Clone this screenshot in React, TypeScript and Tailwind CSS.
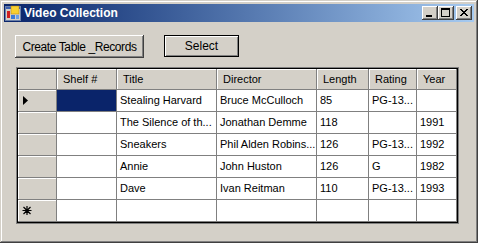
const rows = [
  { title: 'Stealing Harvard', director: 'Bruce McCulloch', length: '85', rating: 'PG-13...', year: '' },
  { title: 'The Silence of th...', director: 'Jonathan Demme', length: '118', rating: '', year: '1991' },
  { title: 'Sneakers', director: 'Phil Alden Robins...', length: '126', rating: 'PG-13...', year: '1992' },
  { title: 'Annie', director: 'John Huston', length: '126', rating: 'G', year: '1982' },
  { title: 'Dave', director: 'Ivan Reitman', length: '110', rating: 'PG-13...', year: '1993' },
]

const headers = ['Shelf #', 'Title', 'Director', 'Length', 'Rating', 'Year']

const raised = 'bg-[#d4d0c8] shadow-[inset_-1px_-1px_#404040,inset_1px_1px_#fff,inset_-2px_-2px_#808080]'
const headerCell =
  'bg-[#d4d0c8] border-r border-b border-[#808080] shadow-[inset_1px_1px_#fff] flex items-center'
const cell = 'border-r border-b border-[#808080] flex items-center pl-[3px] whitespace-nowrap overflow-hidden'
const dataCell = `bg-white ${cell}`

export default function App() {
  return (
    <div className="w-[478px] h-[243px] bg-[#d4d0c8] p-[4px] flex flex-col font-['Liberation_Sans',Arial,sans-serif] text-black shadow-[inset_-1px_-1px_#404040,inset_1px_1px_#d4d0c8,inset_-2px_-2px_#808080,inset_2px_2px_#fff]">
      <div className="h-[18px] flex items-center bg-gradient-to-r from-[#0a246a] to-[#a6caf0] pr-[2px]">
        <AppIcon className="ml-[1px] w-[16px] h-[16px]" />
        <span className="ml-[3px] text-white font-bold text-[12px] leading-none">Video Collection</span>
        <div className="ml-auto flex">
          <CaptionButton>
            <svg width="16" height="14" viewBox="0 0 16 14" aria-hidden>
              <rect x="4" y="9" width="6" height="2" fill="#000" />
            </svg>
          </CaptionButton>
          <CaptionButton>
            <svg width="16" height="14" viewBox="0 0 16 14" aria-hidden>
              <rect x="3.5" y="2.5" width="8" height="8" fill="none" stroke="#000" />
              <rect x="3" y="3" width="9" height="1" fill="#000" />
            </svg>
          </CaptionButton>
          <CaptionButton className="ml-[2px]">
            <svg width="16" height="14" viewBox="0 0 16 14" aria-hidden>
              <path d="M4 3l7 7M5 3l7 7M11 3l-7 7M12 3l-7 7" stroke="#000" strokeWidth="1" />
            </svg>
          </CaptionButton>
        </div>
      </div>

      <div className="flex-1 pl-[11px] pt-[13px] flex flex-col">
        <div className="flex items-start">
          <button className={`w-[129px] h-[23px] text-[12px] tracking-[-0.4px] ${raised}`}>Create Table _Records</button>
          <button className="ml-[20px] w-[75px] h-[22px] text-[12px] border border-black bg-[#d4d0c8] shadow-[inset_1px_1px_#fff,inset_-1px_-1px_#808080]">
            Select
          </button>
        </div>

        <div className="mt-[9px] ml-[1px] w-[443px] border border-[#808080]">
          <div className="border border-black">
            <div className="grid grid-cols-[39px_60px_100px_100px_52px_48px_40px] grid-rows-[21px_repeat(6,22px)] text-[11px]">
              <div className={headerCell} />
              {headers.map((h) => (
                <div key={h} className={`${headerCell} pl-[6px]`}>
                  {h}
                </div>
              ))}

              {rows.map((r, i) => (
                <Row key={i} first={i === 0} r={r} />
              ))}

              <div className={`${headerCell} pl-[4px]`}>
                <svg width="10" height="9" viewBox="0 0 10 9" aria-hidden>
                  <path d="M5 0v9M0.5 4.5h9M1.5 1l7 7M8.5 1l-7 7" stroke="#000" strokeWidth="1.2" />
                </svg>
              </div>
              <div className={dataCell} />
              <div className={dataCell} />
              <div className={dataCell} />
              <div className={dataCell} />
              <div className={dataCell} />
              <div className={dataCell} />
            </div>
          </div>
        </div>
      </div>
    </div>
  )
}

function Row({ first, r }: { first: boolean; r: (typeof rows)[number] }) {
  return (
    <>
      <div className={`${headerCell} pl-[5px]`}>
        {first && (
          <svg width="5" height="9" viewBox="0 0 5 9" aria-hidden>
            <path d="M0 0l5 4.5L0 9z" fill="#000" />
          </svg>
        )}
      </div>
      <div className={first ? `bg-[#0a246a] ${cell}` : dataCell} />
      <div className={dataCell}>{r.title}</div>
      <div className={dataCell}>{r.director}</div>
      <div className={dataCell}>{r.length}</div>
      <div className={dataCell}>{r.rating}</div>
      <div className={dataCell}>{r.year}</div>
    </>
  )
}

function CaptionButton({ children, className = '' }: { children: React.ReactNode; className?: string }) {
  return (
    <div className={`w-[16px] h-[14px] ${raised} ${className}`}>
      {children}
    </div>
  )
}

function AppIcon({ className }: { className?: string }) {
  return (
    <svg viewBox="0 0 16 16" className={className} aria-hidden>
      <rect x="0.5" y="1.5" width="15" height="14" fill="#d4d0c8" stroke="#6a7fa8" />
      <rect x="1" y="2" width="14" height="2" fill="#3a5fb0" />
      <rect x="2" y="6" width="3" height="7" fill="#d02020" />
      <rect x="6" y="1" width="8" height="8" fill="#f8d030" stroke="#b08010" strokeWidth="0.5" />
      <rect x="6" y="10" width="4" height="4" fill="#3a7ad8" />
      <rect x="11" y="10" width="3" height="4" fill="#6aa0e8" />
    </svg>
  )
}
